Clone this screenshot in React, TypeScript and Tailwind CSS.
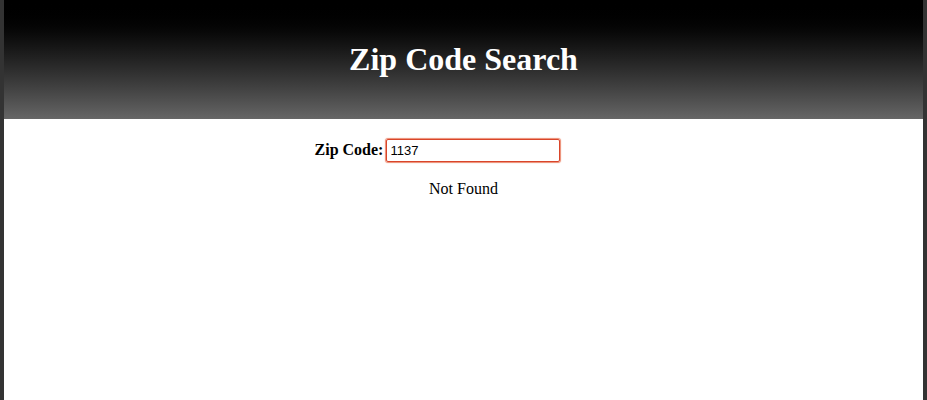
export default function App() {
    return (
        <div className="min-h-[400px] border-x-4 border-[#333] bg-white font-['Liberation_Serif',serif] text-black">
            <header className="h-[119px] bg-gradient-to-b from-[#000] to-[#666] flex items-center justify-center">
                <h1 className="text-[32px] font-bold text-white leading-none pb-[2px]">Zip Code Search</h1>
            </header>

            <div className="flex justify-center items-center pt-[19px] pr-[52px]">
                <label className="text-base font-bold mr-[3px]">Zip Code:</label>
                <input
                    type="text"
                    defaultValue="1137"
                    className="w-[174px] h-[23px] px-[3px] border border-[#d9452a] rounded-[2px] shadow-[0_0_1px_1px_#ec8a70] text-[13px] font-['Liberation_Sans',sans-serif] outline-none"
                />
            </div>

            <p className="text-base text-center mt-[15px]">Not Found</p>
        </div>
    );
}
